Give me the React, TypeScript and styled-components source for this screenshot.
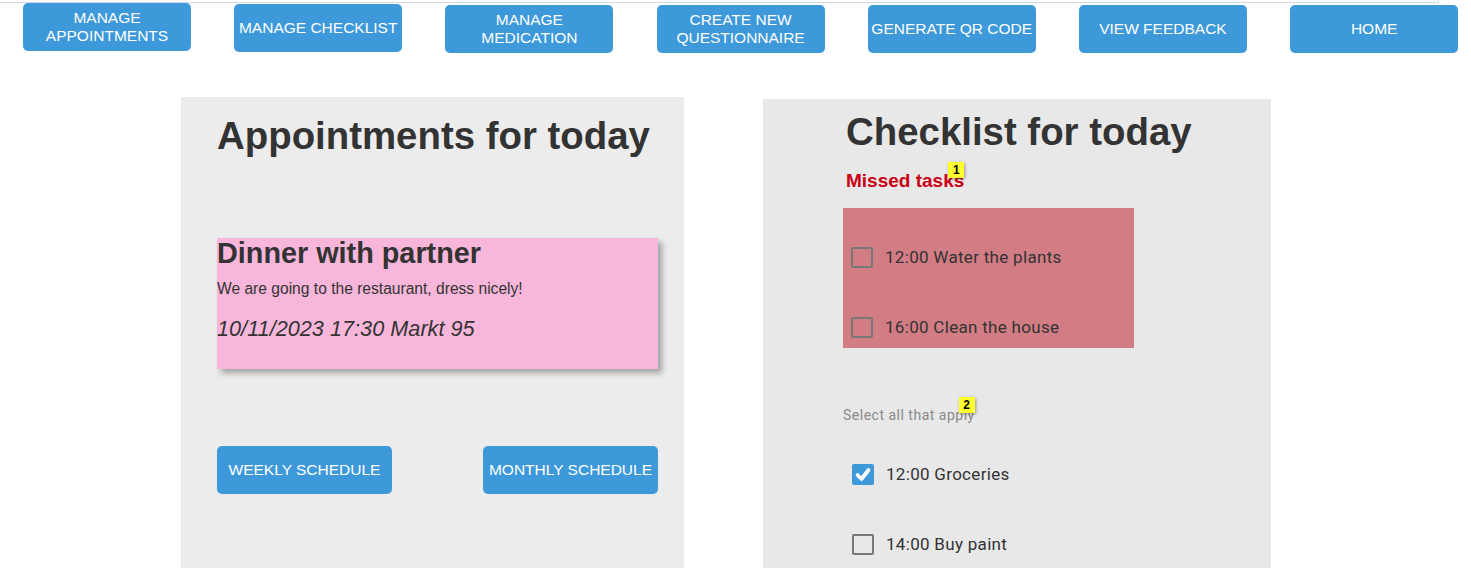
import React from "react";
import styled, { createGlobalStyle } from "styled-components";

const Global = createGlobalStyle`
  html, body { margin: 0; padding: 0; background: #ffffff; overflow: hidden; }
  body { font-family: "Liberation Sans", Arial, sans-serif; color: #333333; }
  * { box-sizing: border-box; }
`;

const TopRule = styled.div`
  width: 1439px;
  height: 3px;
  border-bottom: 1px solid #d2d9e3;
  border-right: 1px solid #d2d9e3;
`;

const Nav = styled.nav`
  display: flex;
  align-items: flex-start;
  gap: 43.2px;
  padding-left: 23px;
`;

const NavButton = styled.button<{ $drop?: number }>`
  width: 168px;
  height: 48px;
  margin-top: ${(p) => p.$drop ?? 0}px;
  padding: 0 2px;
  border: none;
  border-radius: 5px;
  background: #3d99da;
  color: #ffffff;
  font-family: "Liberation Sans", Arial, sans-serif;
  font-size: 15.5px;
  line-height: 18px;
  text-transform: uppercase;
  text-align: center;
  cursor: pointer;
`;

const Columns = styled.main`
  display: flex;
  align-items: flex-start;
  gap: 79px;
  padding-left: 181px;
  margin-top: 44px;
`;

const Panel = styled.section<{ $w: number; $bg: string; $drop?: number; $pl: number; $pt: number }>`
  width: ${(p) => p.$w}px;
  margin-top: ${(p) => p.$drop ?? 0}px;
  background: ${(p) => p.$bg};
  padding: ${(p) => p.$pt}px 0 90px ${(p) => p.$pl}px;
  display: flex;
  flex-direction: column;
  align-items: flex-start;
`;

const PanelTitle = styled.h1<{ $indent?: number }>`
  margin: 0;
  margin-left: ${(p) => p.$indent ?? 0}px;
  font-family: "Liberation Sans", Arial, sans-serif;
  font-size: 38.4px;
  line-height: 44px;
  font-weight: 700;
  color: #333333;
`;

const Card = styled.article`
  width: 441px;
  margin-top: 80px;
  padding: 0 0 28px 0;
  background: #f8b7da;
  box-shadow: 4px 4px 6px rgba(0, 0, 0, 0.32);
`;

const CardTitle = styled.h2`
  margin: 0;
  font-size: 28.8px;
  line-height: 30px;
  font-weight: 700;
  color: #333333;
`;

const CardText = styled.p`
  margin: 11.5px 0 0;
  font-size: 15.6px;
  line-height: 18px;
  color: #333333;
`;

const CardWhen = styled.p`
  margin: 18.5px 0 0;
  font-size: 21.7px;
  line-height: 25px;
  font-style: italic;
  color: #333333;
`;

const ScheduleRow = styled.div`
  width: 441px;
  margin-top: 77px;
  display: flex;
  justify-content: space-between;
`;

const ScheduleButton = styled(NavButton)`
  width: 175px;
`;

const Label = styled.div<{ $kind: "missed" | "hint" }>`
  position: relative;
  display: inline-block;
  font-family: ${(p) => (p.$kind === "missed" ? `"Liberation Sans", Arial, sans-serif` : `Roboto, "Noto Sans", sans-serif`)};
  font-size: ${(p) => (p.$kind === "missed" ? "19px" : "14px")};
  line-height: ${(p) => (p.$kind === "missed" ? "22px" : "20px")};
  letter-spacing: ${(p) => (p.$kind === "missed" ? "0" : "0.5px")};
  font-weight: ${(p) => (p.$kind === "missed" ? 700 : 400)};
  color: ${(p) => (p.$kind === "missed" ? "#cc0014" : "#8a8a8a")};
  margin-top: ${(p) => (p.$kind === "missed" ? "15.5px" : "57px")};
  margin-left: ${(p) => (p.$kind === "missed" ? "3px" : "0")};
`;

const Badge = styled.span`
  position: absolute;
  right: 0;
  top: -8px;
  width: 16px;
  height: 16px;
  background: #ffff2e;
  box-shadow: 1px 1px 3px rgba(0, 0, 0, 0.35);
  color: #000000;
  font-family: "Liberation Sans", Arial, sans-serif;
  font-size: 12px;
  font-weight: 700;
  letter-spacing: 0;
  line-height: 16px;
  text-align: center;
`;

const MissedBox = styled.div`
  width: 291px;
  margin-top: 16.5px;
  background: #d27c84;
`;

const TaskList = styled.div``;

const TaskRow = styled.label<{ $inset: number }>`
  display: flex;
  align-items: center;
  gap: 12px;
  height: 70px;
  padding: 38px 0 10px ${(p) => p.$inset}px;
  font-family: Roboto, "Noto Sans", sans-serif;
  font-size: 17px;
  line-height: 22px;
  letter-spacing: 0.3px;
  color: #333333;
`;

const Box = styled.span<{ $checked?: boolean }>`
  display: inline-flex;
  align-items: center;
  justify-content: center;
  width: 22px;
  height: 21px;
  flex: none;
  border-radius: 2px;
  border: ${(p) => (p.$checked ? "none" : "2.5px solid #777777")};
  background: ${(p) => (p.$checked ? "#3d99da" : "transparent")};
`;

function Check({ checked }: { checked?: boolean }) {
  return (
    <Box $checked={checked}>
      {checked && (
        <svg width="22" height="21" viewBox="0 0 22 21">
          <polyline
            points="5.5,11 9.5,15 16.5,6"
            fill="none"
            stroke="#ffffff"
            strokeWidth="3.8"
            strokeLinecap="round"
            strokeLinejoin="round"
          />
        </svg>
      )}
    </Box>
  );
}

const navItems: { label: React.ReactNode; drop: number }[] = [
  { label: <>MANAGE<br />APPOINTMENTS</>, drop: 0 },
  { label: "MANAGE CHECKLIST", drop: 1 },
  { label: <>MANAGE<br />MEDICATION</>, drop: 2 },
  { label: <>CREATE NEW<br />QUESTIONNAIRE</>, drop: 2 },
  { label: "GENERATE QR CODE", drop: 2 },
  { label: "VIEW FEEDBACK", drop: 2 },
  { label: "HOME", drop: 2 },
];

export default function App() {
  return (
    <>
      <Global />
      <TopRule />
      <Nav>
        {navItems.map((n, i) => (
          <NavButton key={i} $drop={n.drop}>
            {n.label}
          </NavButton>
        ))}
      </Nav>
      <Columns>
        <Panel $w={503} $bg="#ececec" $pl={36} $pt={17}>
          <PanelTitle>Appointments for today</PanelTitle>
          <Card>
            <CardTitle>Dinner with partner</CardTitle>
            <CardText>We are going to the restaurant, dress nicely!</CardText>
            <CardWhen>10/11/2023 17:30 Markt 95</CardWhen>
          </Card>
          <ScheduleRow>
            <ScheduleButton>WEEKLY SCHEDULE</ScheduleButton>
            <ScheduleButton>MONTHLY SCHEDULE</ScheduleButton>
          </ScheduleRow>
        </Panel>
        <Panel $w={508} $bg="#e8e8e8" $drop={2} $pl={80} $pt={11}>
          <PanelTitle $indent={3}>Checklist for today</PanelTitle>
          <Label $kind="missed">
            Missed tasks
            <Badge>1</Badge>
          </Label>
          <MissedBox>
            <TaskRow $inset={8}>
              <Check />
              12:00 Water the plants
            </TaskRow>
            <TaskRow $inset={8}>
              <Check />
              16:00 Clean the house
            </TaskRow>
          </MissedBox>
          <Label $kind="hint">
            Select all that apply
            <Badge>2</Badge>
          </Label>
          <TaskList>
            <TaskRow $inset={9}>
              <Check checked />
              12:00 Groceries
            </TaskRow>
            <TaskRow $inset={9}>
              <Check />
              14:00 Buy paint
            </TaskRow>
          </TaskList>
        </Panel>
      </Columns>
    </>
  );
}
